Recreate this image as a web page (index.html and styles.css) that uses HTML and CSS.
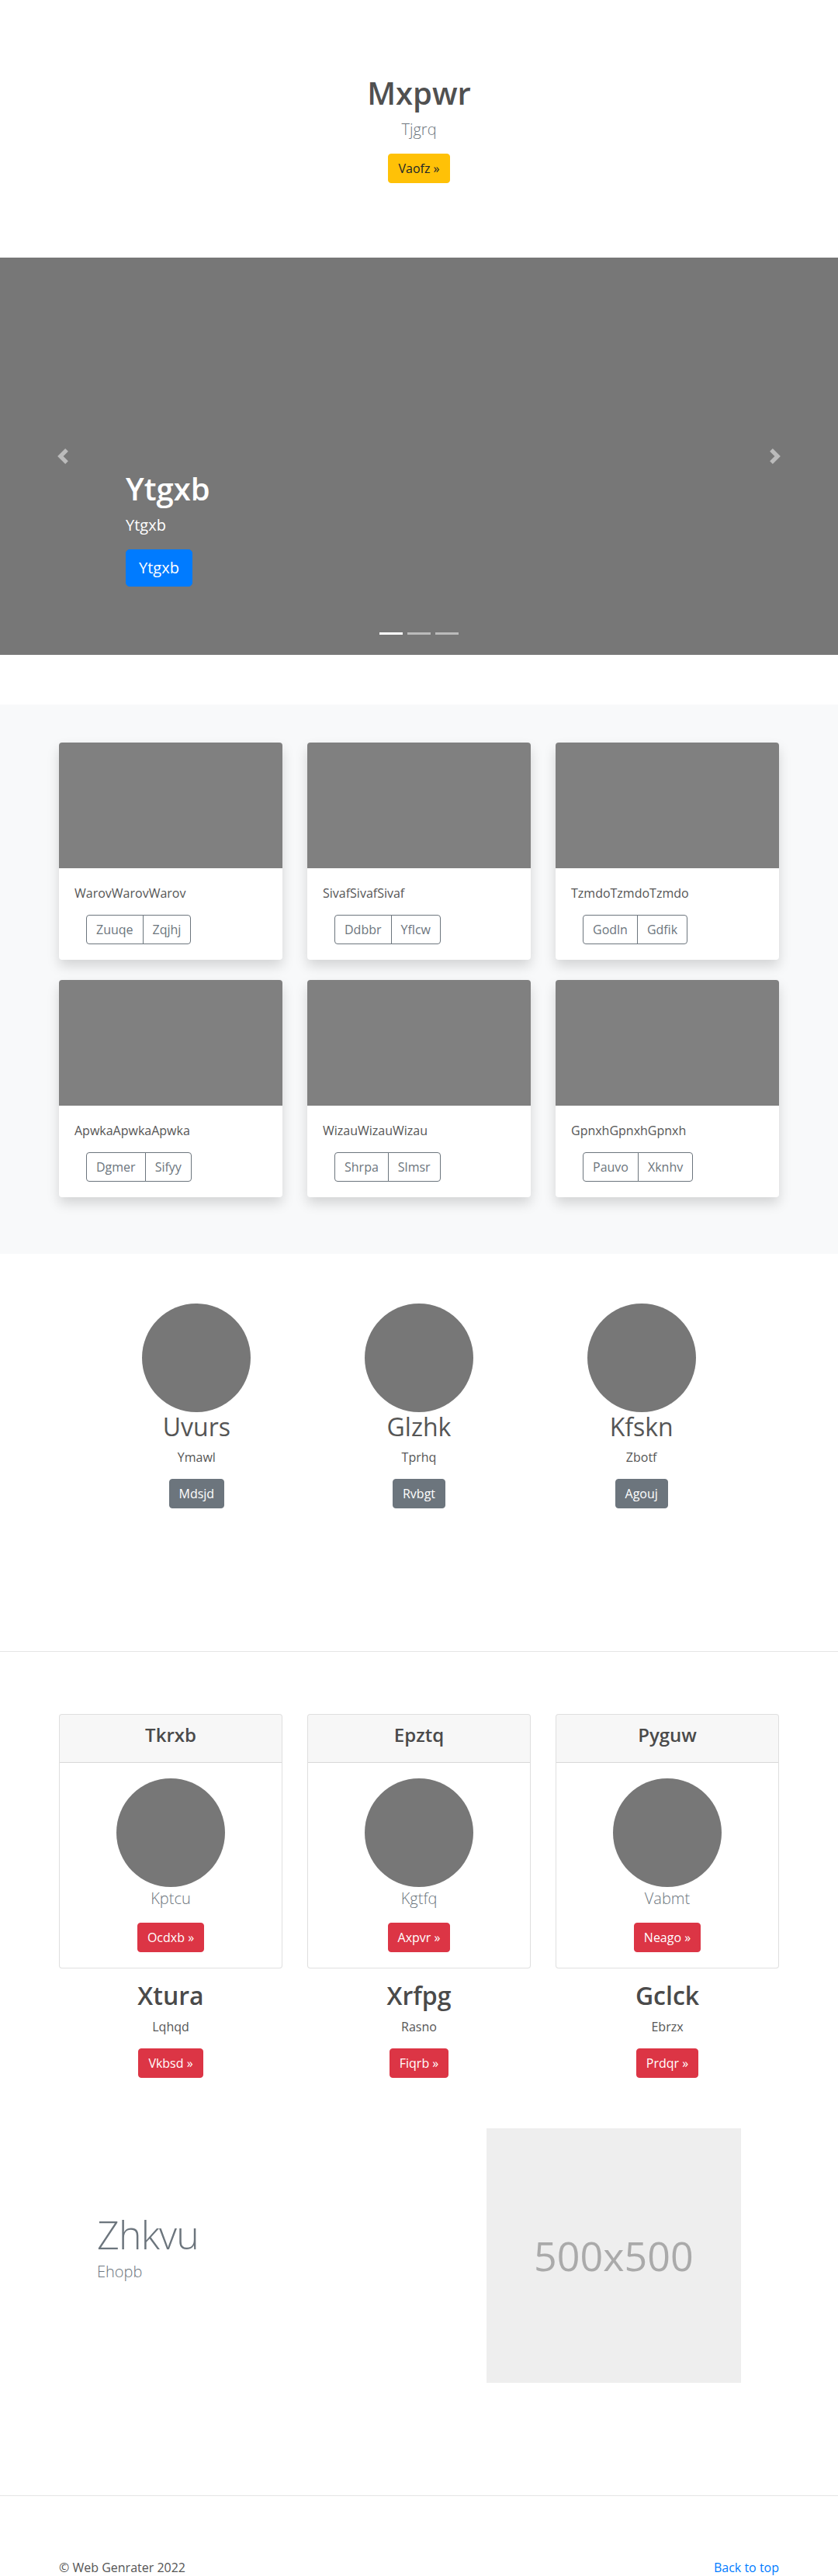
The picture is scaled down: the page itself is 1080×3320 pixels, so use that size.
FILE: index.html
```html
<!DOCTYPE html>
<html lang="en">
<head>
<meta charset="utf-8">
<title>Mxpwr</title>
<link rel="stylesheet" href="styles.css">
</head>
<body>
<section class="intro">
  <h1 class="intro-title">Mxpwr</h1>
  <p class="lead">Tjgrq</p>
  <p class="intro-action"><a class="btn btn-warning" href="#">Vaofz »</a></p>
</section>

<div class="carousel">
  <div class="carousel-slide"></div>
  <a class="carousel-ctrl ctrl-prev" href="#" aria-label="Previous">
    <svg width="20" height="20" viewBox="0 0 8 8"><path fill="#fff" d="M5.25 0l-4 4 4 4 1.5-1.5L4.25 4l2.5-2.5L5.25 0z"/></svg>
  </a>
  <a class="carousel-ctrl ctrl-next" href="#" aria-label="Next">
    <svg width="20" height="20" viewBox="0 0 8 8"><path fill="#fff" d="M2.75 0l-1.5 1.5L3.75 4l-2.5 2.5L2.75 8l4-4-4-4z"/></svg>
  </a>
  <div class="carousel-caption">
    <h1 class="caption-title">Ytgxb</h1>
    <p class="caption-text">Ytgxb</p>
    <p class="caption-action"><a class="btn btn-lg btn-primary" href="#">Ytgxb</a></p>
  </div>
  <ol class="carousel-indicators">
    <li class="active"></li>
    <li></li>
    <li></li>
  </ol>
</div>

<section class="album">
  <div class="album-grid">
    <div class="card shadow-card">
      <div class="card-img"></div>
      <div class="card-body">
        <p class="card-text">WarovWarovWarov</p>
        <div class="btn-group"><a class="btn btn-outline" href="#">Zuuqe</a><a class="btn btn-outline" href="#">Zqjhj</a></div>
      </div>
    </div>
    <div class="card shadow-card">
      <div class="card-img"></div>
      <div class="card-body">
        <p class="card-text">SivafSivafSivaf</p>
        <div class="btn-group"><a class="btn btn-outline" href="#">Ddbbr</a><a class="btn btn-outline" href="#">Yflcw</a></div>
      </div>
    </div>
    <div class="card shadow-card">
      <div class="card-img"></div>
      <div class="card-body">
        <p class="card-text">TzmdoTzmdoTzmdo</p>
        <div class="btn-group"><a class="btn btn-outline" href="#">Godln</a><a class="btn btn-outline" href="#">Gdfik</a></div>
      </div>
    </div>
    <div class="card shadow-card">
      <div class="card-img"></div>
      <div class="card-body">
        <p class="card-text">ApwkaApwkaApwka</p>
        <div class="btn-group"><a class="btn btn-outline" href="#">Dgmer</a><a class="btn btn-outline" href="#">Sifyy</a></div>
      </div>
    </div>
    <div class="card shadow-card">
      <div class="card-img"></div>
      <div class="card-body">
        <p class="card-text">WizauWizauWizau</p>
        <div class="btn-group"><a class="btn btn-outline" href="#">Shrpa</a><a class="btn btn-outline" href="#">Slmsr</a></div>
      </div>
    </div>
    <div class="card shadow-card">
      <div class="card-img"></div>
      <div class="card-body">
        <p class="card-text">GpnxhGpnxhGpnxh</p>
        <div class="btn-group"><a class="btn btn-outline" href="#">Pauvo</a><a class="btn btn-outline" href="#">Xknhv</a></div>
      </div>
    </div>
  </div>
</section>

<section class="marketing">
  <div class="marketing-col">
    <div class="circle"></div>
    <h2 class="marketing-name">Uvurs</h2>
    <p class="marketing-text">Ymawl</p>
    <p class="marketing-action"><a class="btn btn-secondary" href="#">Mdsjd</a></p>
  </div>
  <div class="marketing-col">
    <div class="circle"></div>
    <h2 class="marketing-name">Glzhk</h2>
    <p class="marketing-text">Tprhq</p>
    <p class="marketing-action"><a class="btn btn-secondary" href="#">Rvbgt</a></p>
  </div>
  <div class="marketing-col">
    <div class="circle"></div>
    <h2 class="marketing-name">Kfskn</h2>
    <p class="marketing-text">Zbotf</p>
    <p class="marketing-action"><a class="btn btn-secondary" href="#">Agouj</a></p>
  </div>
</section>

<hr class="divider divider-marketing">

<section class="pricing">
  <div class="pricing-col">
    <div class="card bordered-card">
      <div class="card-header"><h4 class="card-header-title">Tkrxb</h4></div>
      <div class="card-body center-body">
        <div class="circle"></div>
        <p class="muted-lead">Kptcu</p>
        <a class="btn btn-danger" href="#">Ocdxb »</a>
      </div>
    </div>
    <h2 class="pricing-title">Xtura</h2>
    <p class="pricing-text">Lqhqd</p>
    <p class="pricing-action"><a class="btn btn-danger" href="#">Vkbsd »</a></p>
  </div>
  <div class="pricing-col">
    <div class="card bordered-card">
      <div class="card-header"><h4 class="card-header-title">Epztq</h4></div>
      <div class="card-body center-body">
        <div class="circle"></div>
        <p class="muted-lead">Kgtfq</p>
        <a class="btn btn-danger" href="#">Axpvr »</a>
      </div>
    </div>
    <h2 class="pricing-title">Xrfpg</h2>
    <p class="pricing-text">Rasno</p>
    <p class="pricing-action"><a class="btn btn-danger" href="#">Fiqrb »</a></p>
  </div>
  <div class="pricing-col">
    <div class="card bordered-card">
      <div class="card-header"><h4 class="card-header-title">Pyguw</h4></div>
      <div class="card-body center-body">
        <div class="circle"></div>
        <p class="muted-lead">Vabmt</p>
        <a class="btn btn-danger" href="#">Neago »</a>
      </div>
    </div>
    <h2 class="pricing-title">Gclck</h2>
    <p class="pricing-text">Ebrzx</p>
    <p class="pricing-action"><a class="btn btn-danger" href="#">Prdqr »</a></p>
  </div>
</section>

<section class="featurette">
  <div class="featurette-text">
    <h2 class="featurette-heading">Zhkvu</h2>
    <p class="lead">Ehopb</p>
  </div>
  <div class="featurette-media">
    <div class="placeholder-img"><span class="placeholder-label">500x500</span></div>
  </div>
</section>

<hr class="divider divider-footer">

<footer class="footer">
  <p class="footer-copy">© Web Genrater 2022</p>
  <p class="footer-top"><a href="#">Back to top</a></p>
</footer>
</body>
</html>
```

FILE: styles.css
```css
* { box-sizing: border-box; }

html, body {
  margin: 0;
  padding: 0;
}

body {
  font-family: "Open Sans", "Noto Sans", sans-serif;
  font-size: 16px;
  line-height: 24px;
  color: #555;
  background: #fff;
}

a { text-decoration: none; }

p { margin: 0 0 16px; }

h1, h2, h4 { margin: 0 0 8px; }

/* Buttons */
.btn {
  display: inline-block;
  font-size: 16px;
  line-height: 24px;
  padding: 6px 12px;
  border: 1px solid transparent;
  border-radius: 4px;
  font-weight: 400;
  text-align: center;
  vertical-align: middle;
}
.btn-lg {
  font-size: 20px;
  line-height: 30px;
  padding: 8px 16px;
  border-radius: 5px;
}
.btn-warning { background: #ffc107; border-color: #ffc107; color: #212529; }
.btn-primary { background: #007bff; border-color: #007bff; color: #fff; }
.btn-secondary { background: #6c757d; border-color: #6c757d; color: #fff; }
.btn-danger { background: #dc3545; border-color: #dc3545; color: #fff; }
.btn-outline { background: transparent; border-color: #6c757d; color: #6c757d; }

.btn-group { display: inline-flex; margin-left: 15px; }
.btn-group .btn + .btn { margin-left: -1px; }
.btn-group .btn:first-child { border-top-right-radius: 0; border-bottom-right-radius: 0; }
.btn-group .btn:last-child { border-top-left-radius: 0; border-bottom-left-radius: 0; }

.lead {
  font-size: 20px;
  line-height: 30px;
  font-weight: 300;
  color: #6c757d;
}

/* Intro */
.intro {
  padding: 96px 0;
  text-align: center;
}
.intro-title {
  font-size: 40px;
  line-height: 48px;
  font-weight: 600;
  color: #505050;
}
.intro-action { margin: 0; }

/* Carousel */
.carousel {
  position: relative;
  height: 512px;
  margin-bottom: 64px;
}
.carousel-slide {
  height: 100%;
  background: #777;
}
.carousel-ctrl {
  position: absolute;
  top: 0;
  bottom: 0;
  width: 15%;
  display: flex;
  align-items: center;
  justify-content: center;
  opacity: .5;
}
.ctrl-prev { left: 0; }
.ctrl-next { right: 0; }
.carousel-caption {
  position: absolute;
  left: 15%;
  right: 15%;
  bottom: 52px;
  padding: 20px 0;
  color: #fff;
  text-align: left;
}
.caption-title {
  font-size: 40px;
  line-height: 48px;
  font-weight: 600;
  color: #fff;
}
.caption-text {
  font-size: 20px;
  line-height: 30px;
}
.carousel-indicators {
  position: absolute;
  left: 0;
  right: 0;
  bottom: 0;
  margin: 0 0 16px;
  padding: 0;
  list-style: none;
  display: flex;
  justify-content: center;
}
.carousel-indicators li {
  width: 30px;
  height: 3px;
  margin: 0 3px;
  box-sizing: content-box;
  border-top: 10px solid transparent;
  border-bottom: 10px solid transparent;
  background: #fff;
  background-clip: padding-box;
  opacity: .5;
}
.carousel-indicators li.active { opacity: 1; }

/* Album */
.album {
  background: #f8f9fa;
  padding: 49px 0 73px;
}
.album-grid {
  width: 928px;
  margin: 0 auto;
  display: grid;
  grid-template-columns: repeat(3, 288px);
  column-gap: 32px;
  row-gap: 26px;
}
.card {
  background: #fff;
  border-radius: 4px;
  overflow: hidden;
}
.shadow-card {
  box-shadow: 0 8px 16px rgba(0, 0, 0, .15);
}
.card-img {
  height: 162px;
  background: #808080;
}
.card-body { padding: 20px; }
.card-text { color: #555; }

/* Circles */
.circle {
  width: 140px;
  height: 140px;
  border-radius: 50%;
  background: #777;
  margin: 0 auto;
}

/* Marketing */
.marketing {
  width: 860px;
  margin: 0 auto;
  padding-top: 64px;
  display: grid;
  grid-template-columns: repeat(3, 1fr);
}
.marketing-col {
  text-align: center;
  padding: 0 15px;
  margin-bottom: 24px;
}
.marketing-name {
  font-size: 32px;
  line-height: 38.4px;
  font-weight: 400;
}
.marketing-text { margin: 0 12px 16px; }

/* Dividers */
.divider {
  border: 0;
  border-top: 1px solid rgba(0, 0, 0, .1);
  height: 0;
}
.divider-marketing { margin: 144px 0 80px; }
.divider-footer { margin: 145px 0 80px; }

/* Pricing */
.pricing {
  width: 928px;
  margin: 0 auto;
  display: grid;
  grid-template-columns: repeat(3, 288px);
  column-gap: 32px;
  text-align: center;
}
.bordered-card {
  border: 1px solid rgba(0, 0, 0, .125);
  margin-bottom: 16px;
}
.card-header {
  background: rgba(0, 0, 0, .03);
  border-bottom: 1px solid rgba(0, 0, 0, .125);
  padding: 12px 20px;
}
.card-header-title {
  font-size: 24px;
  line-height: 28.8px;
  font-weight: 600;
  color: #4a4a4a;
}
.center-body { text-align: center; }
.muted-lead {
  font-size: 20px;
  line-height: 30px;
  font-weight: 300;
  color: #6c757d;
}
.pricing-title {
  font-size: 32px;
  line-height: 38.4px;
  font-weight: 600;
  color: #4a4a4a;
}

/* Featurette */
.featurette {
  width: 860px;
  margin: 49px auto 0;
  display: grid;
  grid-template-columns: 7fr 5fr;
}
.featurette-text,
.featurette-media { padding: 0 15px; }
.featurette-heading {
  margin: 112px 0 8px;
  font-size: 50px;
  line-height: 1;
  font-weight: 300;
  letter-spacing: -0.8px;
  color: #6c757d;
}
.placeholder-img {
  width: 100%;
  aspect-ratio: 1 / 1;
  background: #eee;
  display: flex;
  align-items: center;
  justify-content: center;
}
.placeholder-label {
  font-size: 52px;
  color: #aaa;
}

/* Footer */
.footer {
  width: 928px;
  margin: 0 auto;
  display: flex;
  justify-content: space-between;
}
.footer-top a { color: #007bff; }
```
